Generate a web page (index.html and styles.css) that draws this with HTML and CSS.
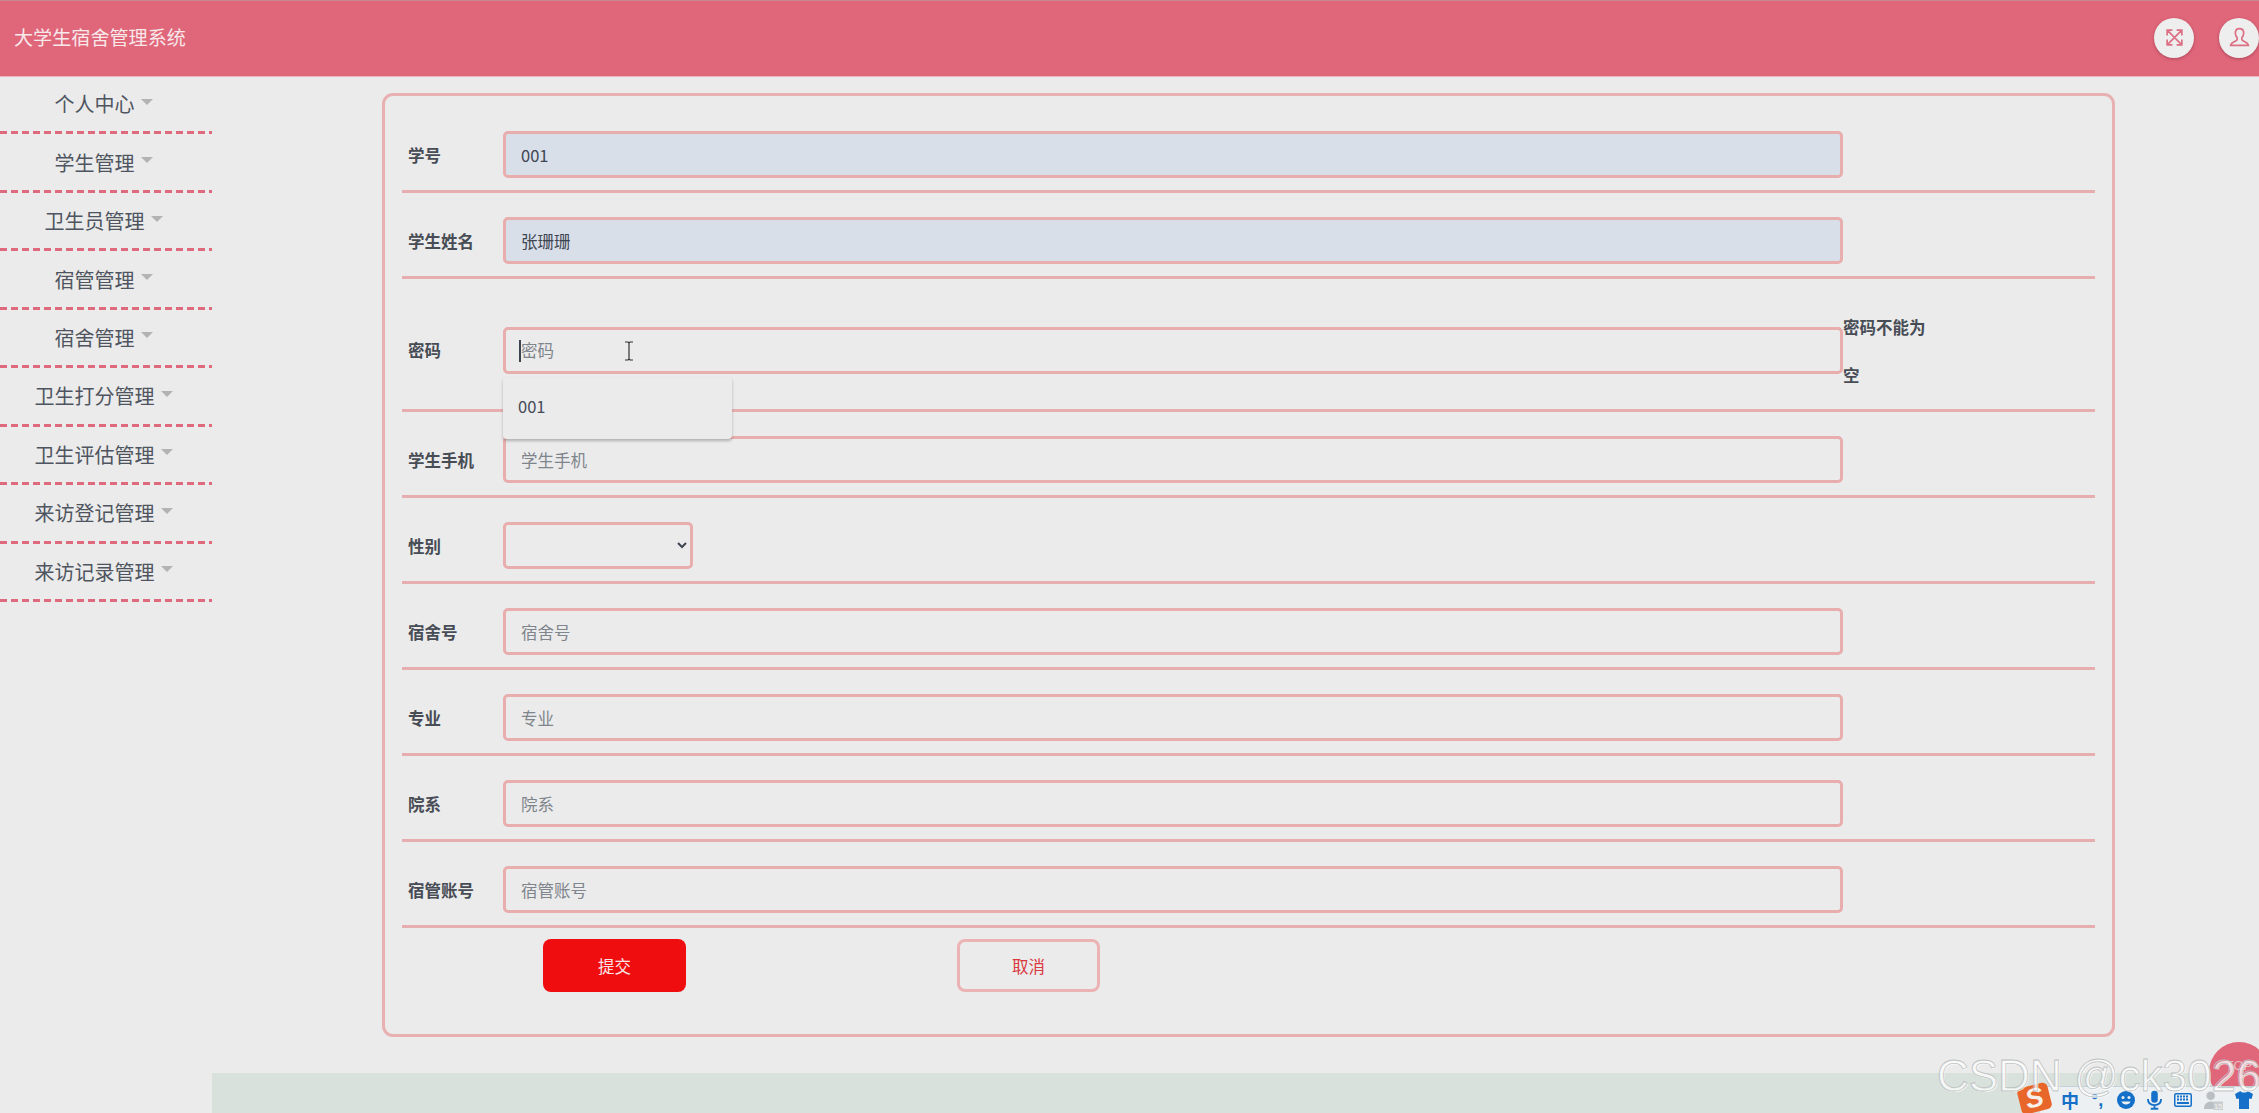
FILE: index.html
```html
<!DOCTYPE html>
<html lang="zh-CN">
<head>
<meta charset="utf-8">
<title>大学生宿舍管理系统</title>
<link rel="stylesheet" href="styles.css">
</head>
<body>
<header class="topbar">
  <div class="brand">大学生宿舍管理系统</div>
  <div class="top-actions">
    <span class="round-btn">
      <svg viewBox="0 0 20 20" class="round-icon"><path d="M3 3l14 14M17 3L3 17M3 8V3h5M12 3h5v5M3 12v5h5M17 12v5h-5"/></svg>
    </span>
    <span class="round-btn">
      <svg viewBox="0 0 22 22" class="round-icon user-icon"><path d="M11 2.500c-2.700 0-4 2-4 4.300 0 2 .8 3.500 1.800 4.500.3 1.200 0 2.200-1 2.800-1.700 1-4.800 1.500-5.300 4.400h17c-.5-2.900-3.600-3.400-5.300-4.400-1-.6-1.300-1.600-1-2.800 1-1 1.800-2.500 1.800-4.500 0-2.300-1.300-4.300-4-4.300z"/></svg>
    </span>
  </div>
</header>

<div class="layout">
  <nav class="sidebar">
    <a class="nav-item">个人中心<i class="nav-caret"></i></a>
    <a class="nav-item">学生管理<i class="nav-caret"></i></a>
    <a class="nav-item">卫生员管理<i class="nav-caret"></i></a>
    <a class="nav-item">宿管管理<i class="nav-caret"></i></a>
    <a class="nav-item">宿舍管理<i class="nav-caret"></i></a>
    <a class="nav-item">卫生打分管理<i class="nav-caret"></i></a>
    <a class="nav-item">卫生评估管理<i class="nav-caret"></i></a>
    <a class="nav-item">来访登记管理<i class="nav-caret"></i></a>
    <a class="nav-item">来访记录管理<i class="nav-caret"></i></a>
  </nav>

  <main class="content">
    <form class="panel">
      <div class="row">
        <label class="row-label">学号</label>
        <input class="field field-filled" value="001">
      </div>
      <div class="row">
        <label class="row-label">学生姓名</label>
        <input class="field field-filled" value="张珊珊">
      </div>
      <div class="row">
        <label class="row-label">密码</label>
        <div class="field-wrap">
          <input class="field" placeholder="密码">
          <span class="text-caret"></span>
          <svg class="ibeam" viewBox="0 0 10 20"><path d="M1 1h3l1 1 1-1h3M5 2v16M1 19h3l1-1 1 1h3"/></svg>
          <div class="suggest">001</div>
        </div>
        <div class="row-error">密码不能为空</div>
      </div>
      <div class="row">
        <label class="row-label">学生手机</label>
        <input class="field" placeholder="学生手机">
      </div>
      <div class="row">
        <label class="row-label">性别</label>
        <select class="field field-select"><option></option><option>男</option><option>女</option></select>
      </div>
      <div class="row">
        <label class="row-label">宿舍号</label>
        <input class="field" placeholder="宿舍号">
      </div>
      <div class="row">
        <label class="row-label">专业</label>
        <input class="field" placeholder="专业">
      </div>
      <div class="row">
        <label class="row-label">院系</label>
        <input class="field" placeholder="院系">
      </div>
      <div class="row">
        <label class="row-label">宿管账号</label>
        <input class="field" placeholder="宿管账号">
      </div>
      <div class="actions">
        <button type="button" class="btn btn-submit">提交</button>
        <button type="button" class="btn btn-cancel">取消</button>
      </div>
    </form>
    <footer class="footer"></footer>
  </main>
</div>

<div class="to-top">TOP</div>

<div class="ime">
  <span class="ime-logo"><span class="ime-logo-s">S</span></span>
  <span class="ime-zh">中</span>
  <span class="ime-punct">°,</span>
  <svg class="ime-icon ime-18" viewBox="0 0 18 18"><circle cx="9" cy="9" r="9" fill="#1470c8"/><circle cx="6" cy="6.500" r="1.500" fill="#ecf0f2"/><circle cx="12" cy="6.500" r="1.500" fill="#ecf0f2"/><path d="M4.500 10.500c1 4 8 4 9 0z" fill="#ecf0f2"/></svg>
  <svg class="ime-icon ime-mic" viewBox="0 0 16 20"><rect x="4.500" y="0" width="7" height="13" rx="3.500" fill="#1470c8"/><path d="M1 9c0 4.500 3 6.500 7 6.500s7-2 7-6.500M8 15.500V19M4 19.300h8" fill="none" stroke="#1470c8" stroke-width="2"/></svg>
  <svg class="ime-icon ime-kb" viewBox="0 0 18 14"><rect x=".75" y=".75" width="16.500" height="12.500" rx="1.500" fill="#ecf0f2" stroke="#1470c8" stroke-width="1.500"/><path d="M3 3.500h12M3 6.500h12" stroke="#1470c8" stroke-width="2" stroke-dasharray="2 1"/><path d="M3 10h12" stroke="#1470c8" stroke-width="2"/></svg>
  <svg class="ime-icon ime-person" viewBox="0 0 20 20"><circle cx="7" cy="5" r="4.500" fill="#b9bfc2"/><path d="M0 19c0-5 3-8 7-8 2 0 3 .5 4 1.500V19z" fill="#b9bfc2"/><rect x="10" y="11" width="10" height="9" fill="#c9cdcf"/><text x="10.500" y="19" class="ime-count">15</text></svg>
  <svg class="ime-icon ime-shirt" viewBox="0 0 18 18"><path d="M5.500 0L0 3l1.500 5 2.500-.5V18h10V7.500l2.500.5L18 3 12.500 0c-.5 2-6.500 2-7 0z" fill="#1470c8"/></svg>
</div>

<div class="watermark">CSDN @ck3026</div>
</body>
</html>
```
FILE: styles.css
```css
* { box-sizing: border-box; }

html, body {
  margin: 0;
  height: 1113px;
  overflow: hidden;
}

body {
  position: relative;
  background: #ebebeb;
  font-family: "Noto Sans CJK SC", "Liberation Sans", sans-serif;
  color: #444a54;
}

.topbar {
  height: 77px;
  display: flex;
  align-items: center;
  justify-content: space-between;
  background: #e0667a;
  border-top: 1px solid #c58a96;
  border-bottom: 1px solid #eeb4be;
  padding: 0 0 2px 14px;
}

.brand {
  font-size: 19.100px;
  color: #f7e8ea;
  line-height: 1;
}

.top-actions {
  display: flex;
  gap: 25px;
}

.round-btn {
  width: 40px;
  height: 40px;
  border-radius: 50%;
  background: #eeeeee;
  box-shadow: 0 1px 3px rgba(120, 40, 55, .5);
  display: flex;
  align-items: center;
  justify-content: center;
}

.round-icon {
  width: 21px;
  height: 21px;
  fill: none;
  stroke: #dc6f83;
  stroke-width: 1.600;
}

.user-icon {
  width: 23px;
  height: 23px;
}

.layout {
  display: flex;
  align-items: flex-start;
}

.sidebar {
  width: 212px;
  flex: none;
  margin-top: -1px;
  display: flex;
  flex-direction: column;
}

.nav-item {
  height: 58.450px;
  padding-bottom: 3px;
  display: flex;
  align-items: center;
  justify-content: center;
  padding-right: 5px;
  font-size: 20px;
  color: #4f5560;
  background: repeating-linear-gradient(90deg, #df6a7e 0 7px, transparent 7px 11px) left bottom / 100% 3px no-repeat;
}

.nav-caret {
  width: 0;
  height: 0;
  margin: -4px 0 0 6px;
  border-left: 6px solid transparent;
  border-right: 6px solid transparent;
  border-top: 6px solid #b3b3b3;
}

.content {
  flex: 1;
  min-width: 0;
  padding-top: 16px;
}

.panel {
  width: 1733px;
  height: 944px;
  margin-left: 170px;
  padding: 11px 17px 0 17px;
  border: 3px solid #e8b0b0;
  border-radius: 11px;
}

.row {
  display: flex;
  align-items: center;
  padding: 24px 0 12px;
  border-bottom: 3px solid #e6aeae;
}

.row-label {
  width: 101px;
  flex: none;
  padding-left: 6px;
  font-size: 16.500px;
  font-weight: 700;
  color: #474c55;
}

.field {
  display: block;
  width: 1340px;
  height: 47px;
  padding: 0 15px;
  background: transparent;
  border: 3px solid #e8adad;
  border-radius: 5px;
  outline: none;
  font-family: "Noto Sans CJK SC", sans-serif;
  font-size: 16.500px;
  color: #3e4552;
}

.field::placeholder {
  color: #7f858c;
  opacity: 1;
}

.field-filled {
  background: #d8dfe9;
}

.field-select {
  width: 190px;
  padding: 0 4px;
}

.field-wrap {
  position: relative;
  flex: none;
}

.text-caret {
  position: absolute;
  left: 16px;
  top: 13px;
  width: 1.500px;
  height: 22px;
  background: #3c4350;
}

.ibeam {
  position: absolute;
  left: 121px;
  top: 14px;
  width: 10px;
  height: 20px;
  fill: none;
  stroke: #333333;
  stroke-width: 1.200;
}

.suggest {
  position: absolute;
  left: 0;
  top: 50px;
  z-index: 2;
  width: 229px;
  height: 62px;
  padding: 0 0 3px 15px;
  display: flex;
  align-items: center;
  background: #ebebeb;
  border-radius: 4px;
  box-shadow: 0 2px 3px rgba(90, 90, 90, .4);
  font-size: 16.500px;
  color: #444a58;
}

.row-error {
  width: 90px;
  flex: none;
  margin-bottom: -2px;
  font-size: 16.500px;
  line-height: 48px;
  font-weight: 700;
  color: #474c55;
}

.actions {
  display: flex;
  gap: 271px;
  margin: 11px 0 0 141px;
}

.btn {
  width: 143px;
  height: 53px;
  border-radius: 8px;
  font-family: "Noto Sans CJK SC", sans-serif;
  font-size: 16.500px;
}

.btn-submit {
  background: #f00d0f;
  border: 0;
  color: #f6e6e6;
}

.btn-cancel {
  background: transparent;
  border: 3px solid #ebb3b3;
  color: #d9383f;
}

.footer {
  height: 40px;
  margin-top: 36px;
  background: #d8e1dc;
}

.to-top {
  position: absolute;
  left: 2209px;
  top: 1042px;
  width: 60px;
  height: 60px;
  padding: 16px 0 0 0;
  border-radius: 50%;
  background: #e0667a;
  color: #e8b9c1;
  font-size: 13px;
  font-family: "Liberation Sans", sans-serif;
  text-align: center;
}

.ime {
  position: absolute;
  left: 2040px;
  top: 1086px;
  width: 219px;
  height: 27px;
  padding-left: 21px;
  display: flex;
  align-items: center;
  gap: 12px;
  background: #ecf0f2;
  border-top: 1px solid #c5d0d8;
}

.ime-logo {
  position: absolute;
  left: -21px;
  top: -2px;
  width: 31px;
  height: 27px;
  display: flex;
  align-items: center;
  justify-content: center;
  background: #e8662a;
  border-radius: 5px;
  transform: rotate(-14deg);
}

.ime-logo-s {
  font-family: "Liberation Sans", sans-serif;
  font-size: 27px;
  font-weight: 700;
  font-style: italic;
  line-height: 1;
  color: #f7efe9;
}

.ime-zh {
  font-size: 18px;
  font-weight: 700;
  line-height: 1;
  color: #1470c8;
}

.ime-punct {
  width: 14px;
  font-family: "Liberation Sans", sans-serif;
  font-size: 18px;
  font-weight: 700;
  line-height: 1;
  color: #1470c8;
}

.ime-icon {
  display: block;
  flex: none;
}

.ime-18 { width: 18px; height: 18px; }
.ime-mic { width: 15px; height: 20px; }
.ime-kb { width: 18px; height: 14px; }
.ime-person { width: 19px; height: 19px; }
.ime-shirt { width: 18px; height: 18px; }

.ime-count {
  font-family: "Liberation Sans", sans-serif;
  font-size: 8px;
  fill: #f3f3f3;
}

.watermark {
  position: absolute;
  left: 1937px;
  top: 1051px;
  z-index: 5;
  font-family: "Liberation Sans", sans-serif;
  font-size: 44px;
  line-height: 50px;
  white-space: nowrap;
  color: rgba(255, 255, 255, .1);
  -webkit-text-stroke: .8px rgba(188, 192, 192, .95);
  text-shadow: 1px 1px 0 rgba(255, 255, 255, .75);
}
```
